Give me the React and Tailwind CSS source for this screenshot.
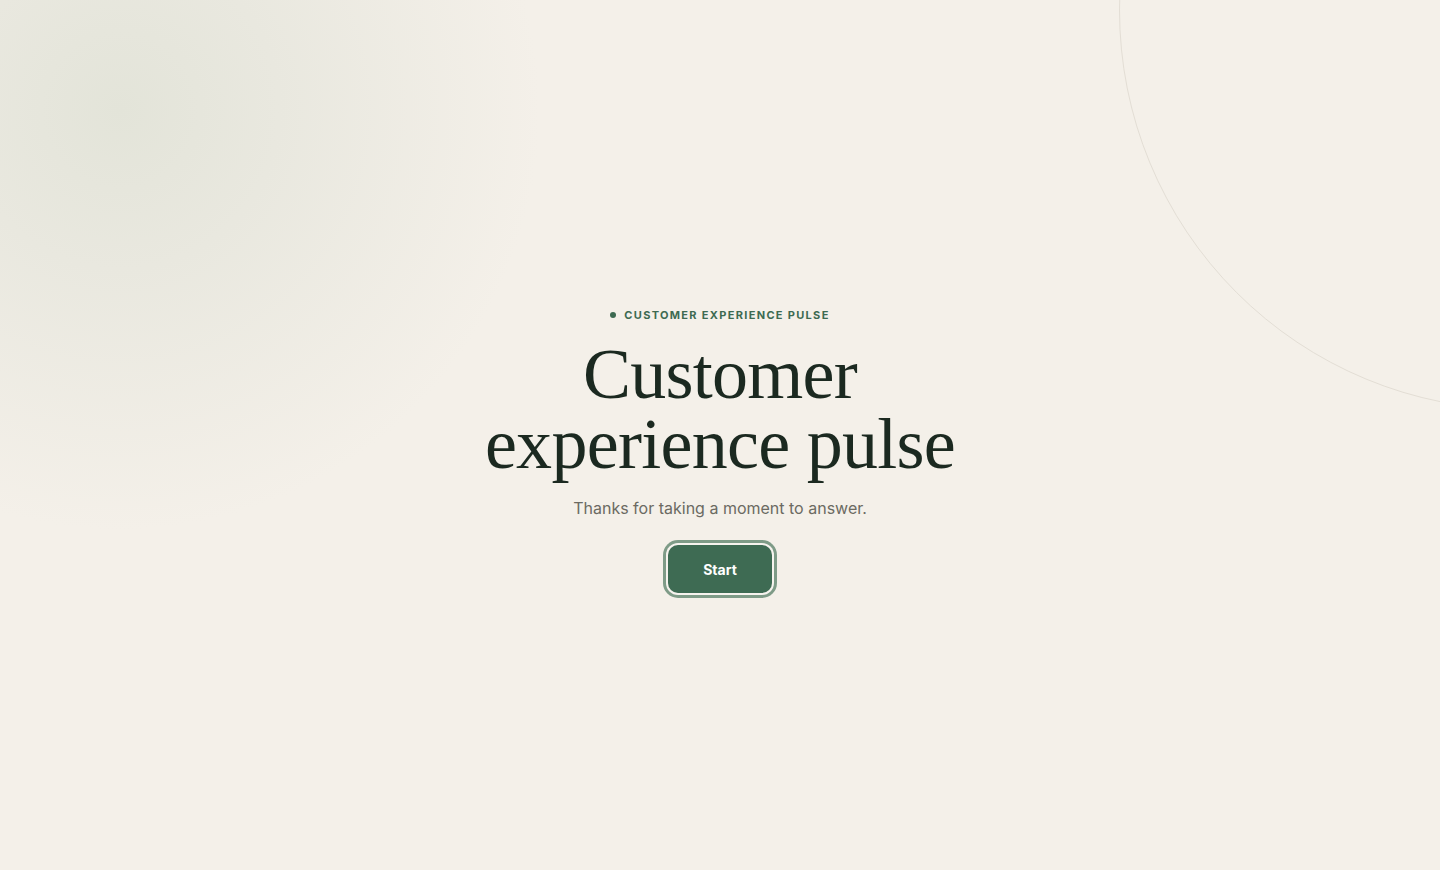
import React from 'react';

const App = () => {
  return (
    <div className="relative min-h-screen w-full overflow-hidden bg-[#f4f0e9] font-['Inter','Liberation_Sans',sans-serif]">
      {/* soft glow top-left */}
      <div className="pointer-events-none absolute -left-[330px] -top-[340px] h-[900px] w-[900px] rounded-full bg-[radial-gradient(circle,#e3e4d9_0%,#e9e8df_25%,rgba(244,240,233,0)_66%)]" />
      {/* thin ring top-right */}
      <div className="pointer-events-none absolute left-[1119px] -top-[390px] h-[800px] w-[800px] rounded-full border border-[#e3ded5]" />

      <main className="relative z-10 flex min-h-screen flex-col items-center justify-center pt-[30px] text-center">
        <div className="mb-4 flex h-4 items-center gap-[8px] text-[11px] font-bold tracking-[0.12em] text-[#3d6a51]">
          <span className="h-[6px] w-[6px] rounded-full bg-[#3d6a51]" />
          CUSTOMER EXPERIENCE PULSE
        </div>

        <h1 className="font-['Liberation_Serif',serif] text-[72px] leading-[70px] font-normal tracking-[-0.01em] text-[#1b2920]">
          Customer
          <br />
          experience pulse
        </h1>

        <p className="mt-4 text-[16px] leading-[26px] text-[#6b6a62]">
          Thanks for taking a moment to answer.
        </p>

        <button className="mt-6 h-12 w-[104px] rounded-[10px] bg-[#3e6b53] text-[14px] font-bold text-white ring-[3px] ring-[#7e9b87] ring-offset-2 ring-offset-[#f6f3ee]">
          Start
        </button>
      </main>
    </div>
  );
};

export default App;
